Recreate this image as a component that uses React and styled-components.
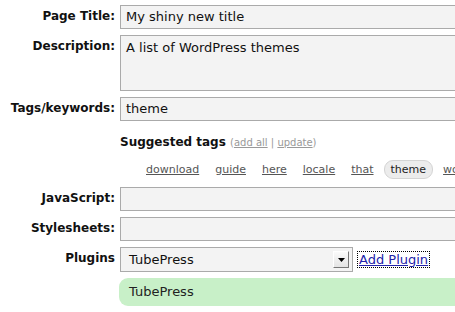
import React from 'react';
import styled, { createGlobalStyle } from 'styled-components';

const GlobalStyle = createGlobalStyle`
  html, body {
    margin: 0;
    padding: 0;
    background: #fff;
    overflow: hidden;
  }
  body {
    font-family: "DejaVu Sans", Verdana, sans-serif;
    color: #111;
  }
`;

const SUGGESTED = ['download', 'guide', 'here', 'locale', 'that', 'theme', 'wordpress'];

export default function App() {
  return (
    <>
      <GlobalStyle />
      <Form>
        <Label>Page Title:</Label>
        <Field>
          <TextInput>My shiny new title</TextInput>
        </Field>

        <Label>Description:</Label>
        <Field>
          <TextArea>A list of WordPress themes</TextArea>
        </Field>

        <Label>Tags/keywords:</Label>
        <Field>
          <TextInput>theme</TextInput>
        </Field>

        <span />
        <Suggested>
          <SuggestedHead>
            Suggested tags{' '}
            <SuggestedActions>
              (<ActionLink>add all</ActionLink> | <ActionLink>update</ActionLink>)
            </SuggestedActions>
          </SuggestedHead>
          <TagList>
            {SUGGESTED.map((tag) => (
              <Tag key={tag} selected={tag === 'theme'}>
                {tag}
              </Tag>
            ))}
          </TagList>
        </Suggested>

        <Label>JavaScript:</Label>
        <Field>
          <TextInput />
        </Field>

        <Label>Stylesheets:</Label>
        <Field>
          <TextInput />
        </Field>

        <Label>Plugins</Label>
        <PluginRow>
          <Select>
            <SelectText>TubePress</SelectText>
            <SelectButton>
              <svg width="7" height="4" viewBox="0 0 7 4">
                <polygon points="0,0 7,0 3.5,4" fill="#000" />
              </svg>
            </SelectButton>
          </Select>
          <AddLink>Add Plugin</AddLink>
        </PluginRow>

        <span />
        <PluginItem>TubePress</PluginItem>
      </Form>
    </>
  );
}

const Form = styled.div`
  display: grid;
  grid-template-columns: 115px 360px;
  column-gap: 5px;
  row-gap: 6px;
  padding-top: 5px;
  width: 480px;
`;

const Label = styled.div`
  font-weight: bold;
  font-size: 12px;
  text-align: right;
  padding-top: 4px;
  color: #111;
`;

const Field = styled.div`
  display: flex;
`;

const TextInput = styled.div`
  box-sizing: border-box;
  width: 100%;
  height: 24px;
  border: 1px solid #aaa;
  background: #f3f3f3;
  font-size: 13px;
  line-height: 22px;
  padding: 0 5px;
  color: #111;
`;

const TextArea = styled(TextInput)`
  height: 56px;
  line-height: 16px;
  padding-top: 4px;
`;

const Suggested = styled.div`
  padding: 8px 0 2px;
`;

const SuggestedHead = styled.div`
  font-size: 12px;
  font-weight: bold;
  color: #111;
`;

const SuggestedActions = styled.span`
  font-size: 10px;
  font-weight: normal;
  color: #999;
`;

const ActionLink = styled.span`
  text-decoration: underline;
  color: #999;
`;

const TagList = styled.div`
  display: flex;
  align-items: center;
  gap: 16px;
  margin-top: 11px;
  padding-left: 26px;
  white-space: nowrap;
`;

const Tag = styled.span`
  font-size: 11px;
  color: ${(p) => (p.selected ? '#222' : '#555')};
  text-decoration: ${(p) => (p.selected ? 'none' : 'underline')};
  background: ${(p) => (p.selected ? '#ececec' : 'transparent')};
  border: 1px solid ${(p) => (p.selected ? '#d4d4d4' : 'transparent')};
  border-radius: 9px;
  padding: 2px 6px;
  margin: 0 ${(p) => (p.selected ? '-6px' : '-7px')};
`;

const PluginRow = styled.div`
  display: flex;
  align-items: center;
  gap: 5px;
`;

const Select = styled.div`
  box-sizing: border-box;
  width: 233px;
  height: 25px;
  border: 1px solid #aaa;
  background: #f3f3f3;
  display: flex;
  align-items: center;
  justify-content: space-between;
  padding: 0 3px 0 8px;
`;

const SelectText = styled.span`
  font-size: 13px;
  color: #111;
`;

const SelectButton = styled.span`
  box-sizing: border-box;
  width: 16px;
  height: 17px;
  background: linear-gradient(#fafafa, #e4e4e4);
  border: 1px solid #fff;
  border-right-color: #777;
  border-bottom-color: #777;
  display: flex;
  align-items: center;
  justify-content: center;
`;

const AddLink = styled.a`
  font-size: 13px;
  color: #2222aa;
  text-decoration: underline;
  outline: 1px dotted #000;
  outline-offset: 0;
  padding: 0 1px;
  line-height: 15px;
  cursor: pointer;
`;

const PluginItem = styled.div`
  box-sizing: border-box;
  height: 28px;
  margin-left: -1px;
  background: #c8f0c8;
  border-radius: 9px 0 0 9px;
  font-size: 13px;
  line-height: 28px;
  padding-left: 10px;
  color: #222;
`;
